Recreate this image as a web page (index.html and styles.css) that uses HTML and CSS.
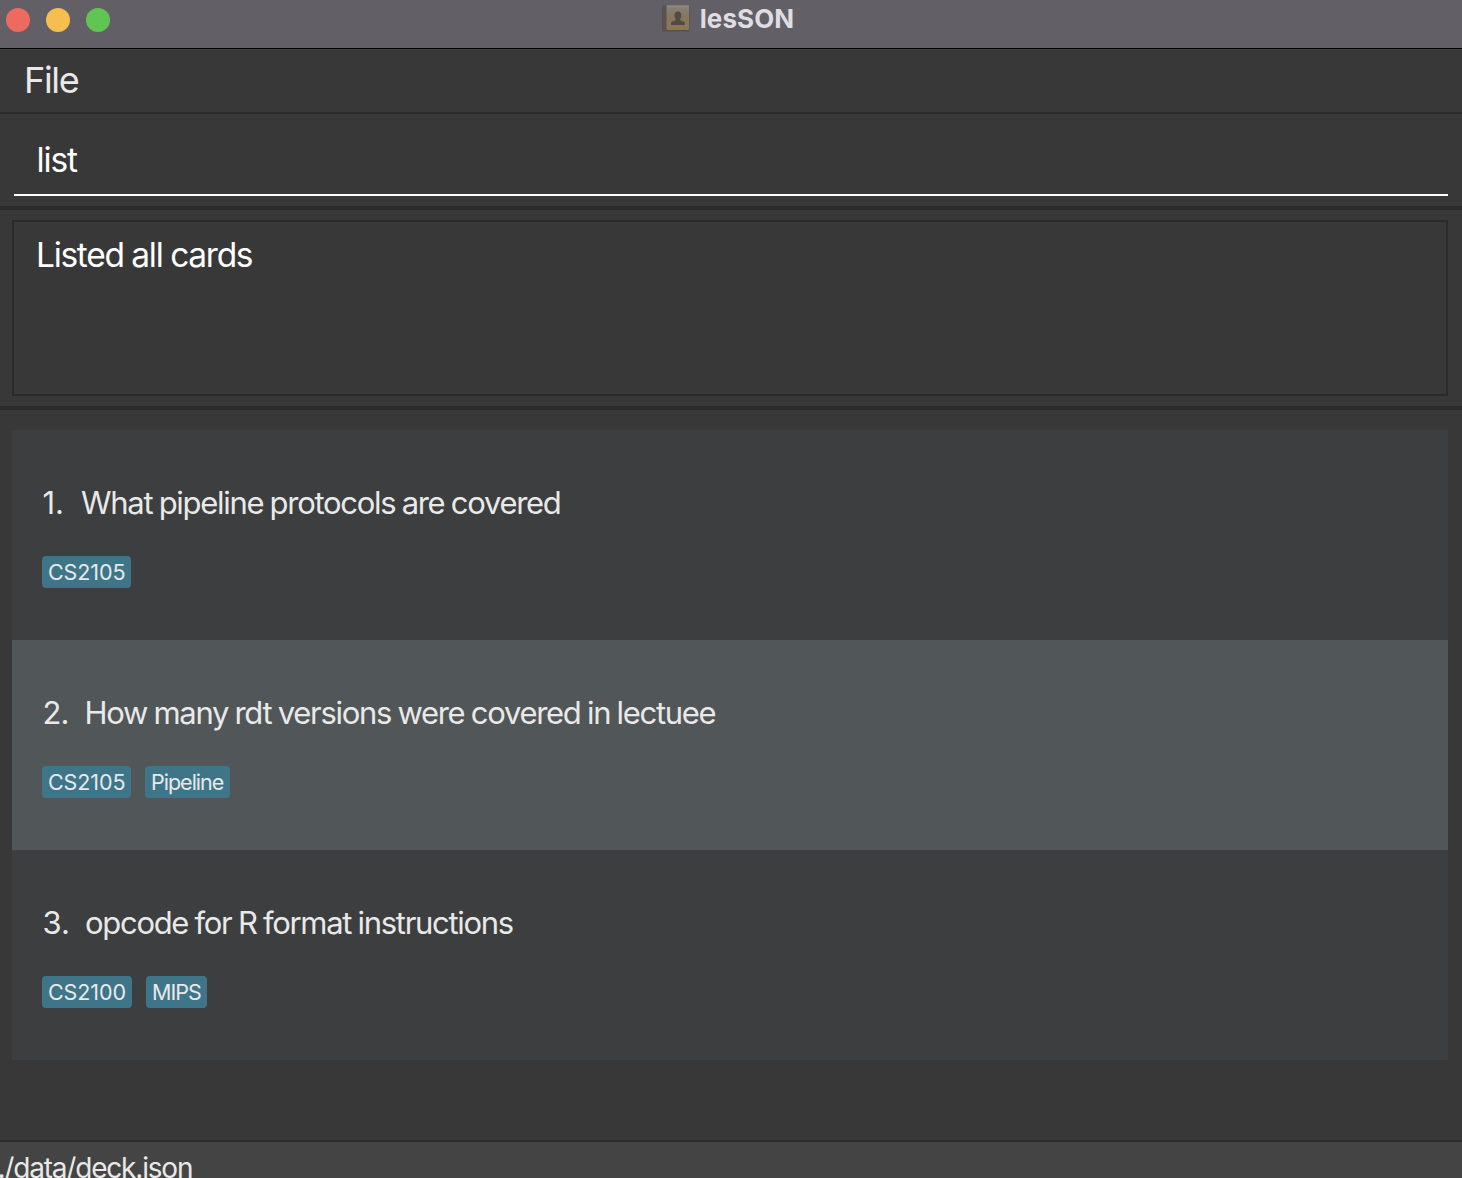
FILE: index.html
```html
<!DOCTYPE html>
<html lang="en">
<head>
<meta charset="utf-8">
<title>lesSON</title>
<link rel="stylesheet" href="styles.css">
</head>
<body>
<div class="window">
  <header class="titlebar">
    <div class="controls"><span class="dot close"></span><span class="dot minimize"></span><span class="dot zoom"></span></div>
    <div class="title">
      <svg class="book" width="28" height="27" viewBox="0 0 28 27" aria-hidden="true">
        <defs><linearGradient id="cover" x1="0" y1="0" x2="0" y2="1"><stop offset="0" stop-color="#89837c"/><stop offset="0.4" stop-color="#85785f"/><stop offset="1" stop-color="#8d7750"/></linearGradient></defs>
        <rect x="0" y="0.5" width="27.500" height="26" rx="1.500" fill="#555052"/>
        <rect x="1" y="1" width="2.500" height="24" fill="#5c5350"/>
        <rect x="4.500" y="0.500" width="22.500" height="24.500" rx="0.8" fill="url(#cover)"/>
        <path d="M5 1h22" stroke="#928e8c" stroke-width="1"/>
        <path d="M9 20v-2.200c0-1.500 4.800-1.800 4.800-3.300 0-.8-1.300-1.700-1.300-4.300 0-2.200 1.300-3.700 3.400-3.700s3.400 1.500 3.400 3.700c0 2.600-1.300 3.500-1.300 4.300 0 1.500 4.800 1.800 4.800 3.300v2.200z" fill="#504b49"/>
      </svg>
      <span class="name">lesSON</span>
    </div>
  </header>
  <nav class="menubar"><span class="file">File</span></nav>
  <section class="command"><div class="field">list</div></section>
  <section class="result"><div class="display"><span class="message">Listed all cards</span></div></section>
  <main class="deck">
    <article class="card">
      <div class="question"><span class="num one">1.</span><span>What pipeline protocols are covered</span></div>
      <div class="tags"><span class="tag code">CS2105</span></div>
    </article>
    <article class="card alternate">
      <div class="question"><span class="num two">2.</span><span>How many rdt versions were covered in lectuee</span></div>
      <div class="tags"><span class="tag code">CS2105</span><span class="tag">Pipeline</span></div>
    </article>
    <article class="card">
      <div class="question"><span class="num three">3.</span><span>opcode for R format instructions</span></div>
      <div class="tags"><span class="tag code wide">CS2100</span><span class="tag mips">MIPS</span></div>
    </article>
  </main>
  <footer class="status"><span class="path">./data/deck.json</span></footer>
</div>
</body>
</html>
```
FILE: styles.css
```css
* { box-sizing: border-box; }
body { margin: 0; background: #383838; color: #e9e9e9; font-family: Inter, "Liberation Sans", sans-serif; }
.window { display: flex; flex-direction: column; height: 1178px; overflow: hidden; white-space: nowrap; }
.titlebar { display: grid; grid-template-columns: 1fr auto 1fr; height: 49px; flex: none; background: #626066; border-bottom: 1px solid #000; }
.controls { display: flex; gap: 16px; padding: 8px 0 0 6px; }
.dot { width: 24px; height: 24px; border-radius: 50%; }
.close { background: #ed6a5e; }
.minimize { background: #f5bf4f; }
.zoom { background: #61c554; }
.title { display: flex; gap: 10px; padding: 5px 6px 0 0; color: #dfdde1; }
.name { font-size: 26px; font-weight: 700; line-height: 28px; letter-spacing: 0.1px; }
.menubar { height: 65px; flex: none; padding: 8px 24px; border-top: 1px solid #404040; border-bottom: 2px solid #2b2b2b; font-size: 36px; line-height: 44px; letter-spacing: -1.3px; }
.command { height: 96px; flex: none; padding: 0 14px 10px; border-bottom: 4px solid #2b2b2b; color: #fff; }
.field { height: 82px; padding: 24px 22.5px 0; border-bottom: 2px solid #fff; font-size: 33.5px; line-height: 44px; letter-spacing: -1.1px; }
.result { height: 200px; flex: none; padding: 10px 14px 10px 12px; border-bottom: 4px solid #2b2b2b; color: #fff; }
.display { height: 176px; padding: 11px 22px; border: 2px solid #2b2b2b; font-size: 33.5px; line-height: 44px; letter-spacing: -1.3px; word-spacing: -0.4px; }
.deck { flex: 1; padding: 20px 14px 0 12px; }
.card { height: 210px; padding: 52px 30px 0; background: #3c3e3f; }
.alternate { background: #515658; }
.question { display: flex; height: 42px; font-size: 31px; line-height: 42px; letter-spacing: -1.3px; word-spacing: -1px; }
.num { flex: none; width: 39px; padding-left: 0.5px; letter-spacing: 0; }
.two { width: 42.5px; letter-spacing: -0.8px; }
.three { width: 43px; letter-spacing: 0; }
.tags { display: flex; gap: 14px; margin-top: 32px; }
.tag { width: 85px; height: 32px; padding: 0 6px; border-radius: 4px; background: #3e7589; font-size: 21.5px; line-height: 33px; letter-spacing: -1px; }
.code { width: 89px; letter-spacing: -0.1px; }
.wide { width: 90px; }
.mips { width: 61px; letter-spacing: -0.95px; }
.status { height: 38px; flex: none; padding-top: 5px; border-top: 2px solid #2b2b2b; background: #444; font-size: 28px; line-height: 42px; letter-spacing: -1.2px; }
.path { margin-left: -2.5px; }
```
